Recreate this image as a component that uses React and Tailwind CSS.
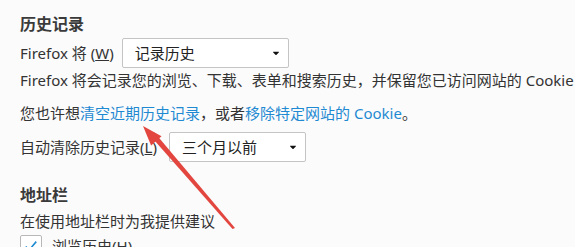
import { FaCaretDown } from "react-icons/fa";

function Select({ value, width }) {
  return (
    <div
      className={`flex items-center justify-between h-[30px] ${width} bg-white border border-[#c4c4c4] rounded-[2px] pl-[12px] pr-[7px] text-[#222]`}
    >
      <span>{value}</span>
      <FaCaretDown className="w-[10px] h-[10px] text-[#111]" />
    </div>
  );
}

function App() {
  return (
    <div
      className="relative w-[575px] h-[247px] overflow-hidden bg-[#fbfbfb] text-[#333] text-[15px] pl-[20px] pt-[14px]"
      style={{ fontFamily: '"Noto Sans", "Noto Sans CJK SC", sans-serif' }}
    >
      <h3 className="leading-[20px] h-[20px] text-[16px] font-bold text-[#3a3a3a]">历史记录</h3>
      <div className="mt-[4px] flex items-center gap-[8px] h-[30px]">
        <span className="leading-[20px]">
          Firefox 将 (<span className="underline">W</span>)
        </span>
        <Select value="记录历史" width="w-[167px]" />
      </div>
      <p className="mt-[2px] leading-[20px] whitespace-nowrap">
        Firefox 将会记录您的浏览、下载、表单和搜索历史，并保留您已访问网站的 Cookie
      </p>
      <p className="mt-[13px] leading-[20px] whitespace-nowrap">
        您也许想<span className="text-[#1f8ad2]">清空近期历史记录</span>，或者
        <span className="text-[#1f8ad2]">移除特定网站的 Cookie</span>。
      </p>
      <div className="mt-[9px] flex items-center gap-[12px] h-[30px]">
        <span className="leading-[20px]">
          自动清除历史记录(<span className="underline">L</span>)
        </span>
        <Select value="三个月以前" width="w-[137px]" />
      </div>
      <h3 className="mt-[23px] leading-[20px] h-[20px] text-[16px] font-bold text-[#3a3a3a]">地址栏</h3>
      <p className="mt-[6px] leading-[20px]">在使用地址栏时为我提供建议</p>
      <div className="mt-[4px] flex items-start gap-[10px]">
        <div className="w-[22px] h-[22px] border border-[#b8b8b8] rounded-[2px] bg-white flex items-center justify-center">
          <svg viewBox="0 0 16 16" className="w-[14px] h-[14px]">
            <path d="M2 8.5 L6 12.5 L14 3" fill="none" stroke="#1f8ad2" strokeWidth="1.8" />
          </svg>
        </div>
        <span className="leading-[20px] mt-[1px]">
          浏览历史(<span className="underline">H</span>)
        </span>
      </div>
      <svg className="absolute left-0 top-0 pointer-events-none" width="575" height="247">
        <polygon points="235,228 232.5,229 150.5,136 154.5,132.5" fill="#e2463f" />
        <polygon points="143,126 161.5,136.2 151.1,145.6" fill="#e2463f" />
      </svg>
    </div>
  );
}

export default App;
